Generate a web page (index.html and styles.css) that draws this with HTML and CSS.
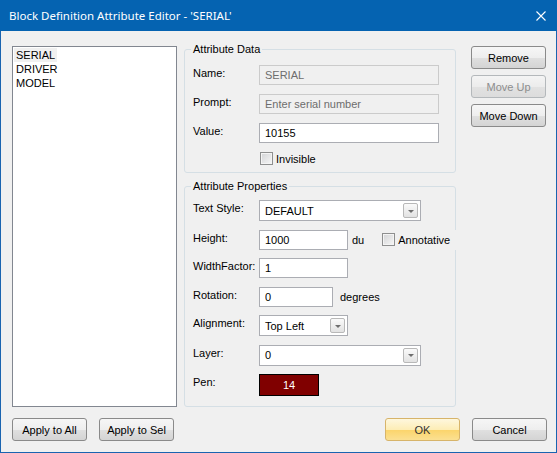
FILE: index.html
```html
<!DOCTYPE html>
<html lang="en">
<head>
  <meta charset="UTF-8" />
  <title>Block Definition Attribute Editor</title>
  <link rel="stylesheet" href="styles.css">
</head>
<body>

<div class="window">
  <div class="titlebar">
    <span class="title">Block Definition Attribute Editor - 'SERIAL'</span>
    <svg class="close" width="10" height="10" viewBox="0 0 10 10">
      <path d="M0.5 0.5 L9.5 9.5 M9.5 0.5 L0.5 9.5" stroke="#fff" stroke-width="1.1" fill="none"/>
    </svg>
  </div>

  <div class="content">
    <div class="main">
      <!-- attribute list -->
      <ul class="attr-list">
        <li class="selected">SERIAL</li>
        <li>DRIVER</li>
        <li>MODEL</li>
      </ul>

      <div class="groups">
        <fieldset class="group group-data">
          <legend>Attribute Data</legend>
          <div class="rows data-rows">
            <div class="field">
              <span class="field-label">Name:</span>
              <input class="input input-wide" type="text" value="SERIAL" disabled>
            </div>
            <div class="field">
              <span class="field-label">Prompt:</span>
              <input class="input input-wide" type="text" value="Enter serial number" disabled>
            </div>
            <div class="field">
              <span class="field-label">Value:</span>
              <input class="input input-wide" type="text" value="10155">
            </div>
            <div class="field field-check">
              <span class="check"></span>
              <span class="check-text">Invisible</span>
            </div>
          </div>
        </fieldset>

        <fieldset class="group group-props">
          <legend>Attribute Properties</legend>
          <div class="rows prop-rows">
            <div class="field field-tall">
              <span class="field-label">Text Style:</span>
              <div class="combo combo-wide">
                <span>DEFAULT</span>
                <span class="drop-btn"></span>
              </div>
            </div>
            <div class="field">
              <span class="field-label">Height:</span>
              <input class="input input-mid" type="text" value="1000">
              <span class="unit">du</span>
              <label class="annotative">
                <span class="check"></span>
                <span class="check-text">Annotative</span>
              </label>
            </div>
            <div class="field">
              <span class="field-label">WidthFactor:</span>
              <input class="input input-mid" type="text" value="1">
            </div>
            <div class="field">
              <span class="field-label">Rotation:</span>
              <input class="input input-short" type="text" value="0">
              <span class="unit unit-deg">degrees</span>
            </div>
            <div class="field field-tall">
              <span class="field-label">Alignment:</span>
              <div class="combo combo-mid">
                <span>Top Left</span>
                <span class="drop-btn"></span>
              </div>
            </div>
            <div class="field field-tall">
              <span class="field-label">Layer:</span>
              <div class="combo combo-wide">
                <span>0</span>
                <span class="drop-btn"></span>
              </div>
            </div>
            <div class="field field-pen">
              <span class="field-label">Pen:</span>
              <div class="pen">14</div>
            </div>
          </div>
        </fieldset>
      </div>

      <div class="side-buttons">
        <button class="btn">Remove</button>
        <button class="btn" disabled>Move Up</button>
        <button class="btn">Move Down</button>
      </div>
    </div>

    <div class="footer">
      <div class="btn-group">
        <button class="btn">Apply to All</button>
        <button class="btn">Apply to Sel</button>
      </div>
      <div class="btn-group">
        <button class="btn btn-ok">OK</button>
        <button class="btn">Cancel</button>
      </div>
    </div>
  </div>
</div>

</body>
</html>
```

FILE: styles.css
```css
body {
  margin: 0;
  font-family: "Liberation Sans", Arial, sans-serif;
  font-size: 11px;
  color: #000;
  background: #fff;
}

.window {
  width: 557px;
  height: 453px;
  display: flex;
  flex-direction: column;
  background: #f0f0f0;
}

.titlebar {
  height: 31px;
  flex: none;
  background: #0563b1;
  color: #fff;
  display: flex;
  align-items: center;
  justify-content: space-between;
  padding: 0 11px 0 9px;
  font-family: "Noto Sans", "Open Sans", sans-serif;
  font-size: 11.5px;
}

.title {
  margin-top: -1px;
}

.content {
  flex: 1;
  border: 1px solid #1a64b0;
  border-top: none;
  padding: 11px 9px 0 11px;
  display: flex;
  flex-direction: column;
}

.main {
  display: flex;
  align-items: flex-start;
  height: 365px;
}

/* attribute list box */
.attr-list {
  width: 165px;
  height: 361px;
  box-sizing: border-box;
  margin: 4px 0 0;
  padding: 1px 0 0 1px;
  list-style: none;
  background: #fff;
  border: 1px solid #828790;
}

.attr-list li {
  width: fit-content;
  padding: 0 2px;
  line-height: 14px;
}

.attr-list li.selected {
  background: #f0f0f0;
}

.groups {
  margin-left: 7px;
  width: 272px;
  height: 365px;
  display: flex;
  flex-direction: column;
}

.group {
  margin: 0;
  min-width: 0;
  box-sizing: border-box;
  border: 1px solid #d5dfe5;
  border-radius: 3px;
  padding: 9px 8px 6px 8px;
}

.group legend {
  padding: 0 2px;
  margin-left: -2px;
  line-height: 14px;
}

.group-data {
  height: 131px;
  flex: none;
}

.group-props {
  margin-top: 6px;
  flex: 1;
  padding-top: 7px;
}

.rows {
  display: flex;
  flex-direction: column;
}

.data-rows {
  gap: 9px;
}

.prop-rows {
  gap: 8.5px;
}

.field {
  display: flex;
  align-items: center;
  height: 20px;
}

.field-tall {
  height: 21px;
}

.field-pen {
  height: 22px;
}

.field-check {
  height: 13px;
  padding-left: 67px;
}

.field-label {
  width: 66px;
  flex: none;
  align-self: flex-start;
  line-height: 14px;
  padding-top: 1px;
}

.input {
  box-sizing: border-box;
  height: 20px;
  margin: 0;
  padding: 0 5px;
  border: 1px solid #abadb3;
  background: #fff;
  font-family: inherit;
  font-size: 11px;
  color: #000;
  outline: none;
}

.input:disabled {
  background: #f0f0f0;
  border-color: #cbcbcb;
  color: #6d6d6d;
}

.input-wide {
  width: 180px;
}

.input-mid {
  width: 89px;
}

.input-short {
  width: 74px;
}

.unit {
  margin-left: 4px;
}

.unit-deg {
  margin-left: 7px;
}

.check {
  width: 13px;
  height: 13px;
  flex: none;
  box-sizing: border-box;
  border: 1px solid #8e8f8f;
  background: linear-gradient(135deg, #d2d3d5, #f7f7f7);
  box-shadow: inset 0 0 0 1px #f4f4f4;
}

.check-text {
  margin-left: 3px;
}

.annotative {
  display: flex;
  align-items: center;
  height: 20px;
  margin-left: 18px;
  padding-right: 10px;
  background: #f0f0f0;
  margin-right: -20px;
}

.combo {
  box-sizing: border-box;
  height: 21px;
  display: flex;
  align-items: center;
  justify-content: space-between;
  padding: 0 2px 0 5px;
  background: #fff;
  border: 1px solid #abadb3;
}

.combo-wide {
  width: 162px;
}

.combo-mid {
  width: 89px;
}

.drop-btn {
  width: 15px;
  height: 15px;
  box-sizing: border-box;
  border: 1px solid #b8b8b8;
  border-radius: 2px;
  background: linear-gradient(#fafafa, #e2e2e2);
  display: flex;
  align-items: center;
  justify-content: center;
}

.drop-btn::after {
  content: "";
  border-left: 3px solid transparent;
  border-right: 3px solid transparent;
  border-top: 3px solid #6e6e6e;
  margin-top: 1px;
}

.pen {
  box-sizing: border-box;
  width: 60px;
  height: 22px;
  background: #800000;
  border: 1px solid #000;
  color: #fff;
  display: flex;
  align-items: center;
  justify-content: center;
}

.side-buttons {
  margin: 4px 0 0 15px;
  display: flex;
  flex-direction: column;
  gap: 6px;
}

.btn {
  width: 75px;
  height: 23px;
  box-sizing: border-box;
  margin: 0;
  padding: 0;
  border: 1px solid #8a8a8a;
  border-radius: 3px;
  background: linear-gradient(#f6f6f6 0%, #eeeeee 50%, #e0e0e0 51%, #d4d4d4 100%);
  font-family: inherit;
  font-size: 11px;
  color: #000;
}

.btn:disabled {
  border-color: #b4b8bb;
  background: linear-gradient(#f4f4f4 0%, #ececec 50%, #e2e2e2 51%, #dcdcdc 100%);
  color: #8d8d8d;
}

.btn-ok {
  border-color: #d7b46a;
  background: linear-gradient(#fef7dd 0%, #fdedb6 50%, #fbd46a 51%, #fbe092 100%);
  color: #333;
}

.footer {
  margin-top: 11px;
  display: flex;
  justify-content: space-between;
}

.btn-group {
  display: flex;
  gap: 12px;
}
```
